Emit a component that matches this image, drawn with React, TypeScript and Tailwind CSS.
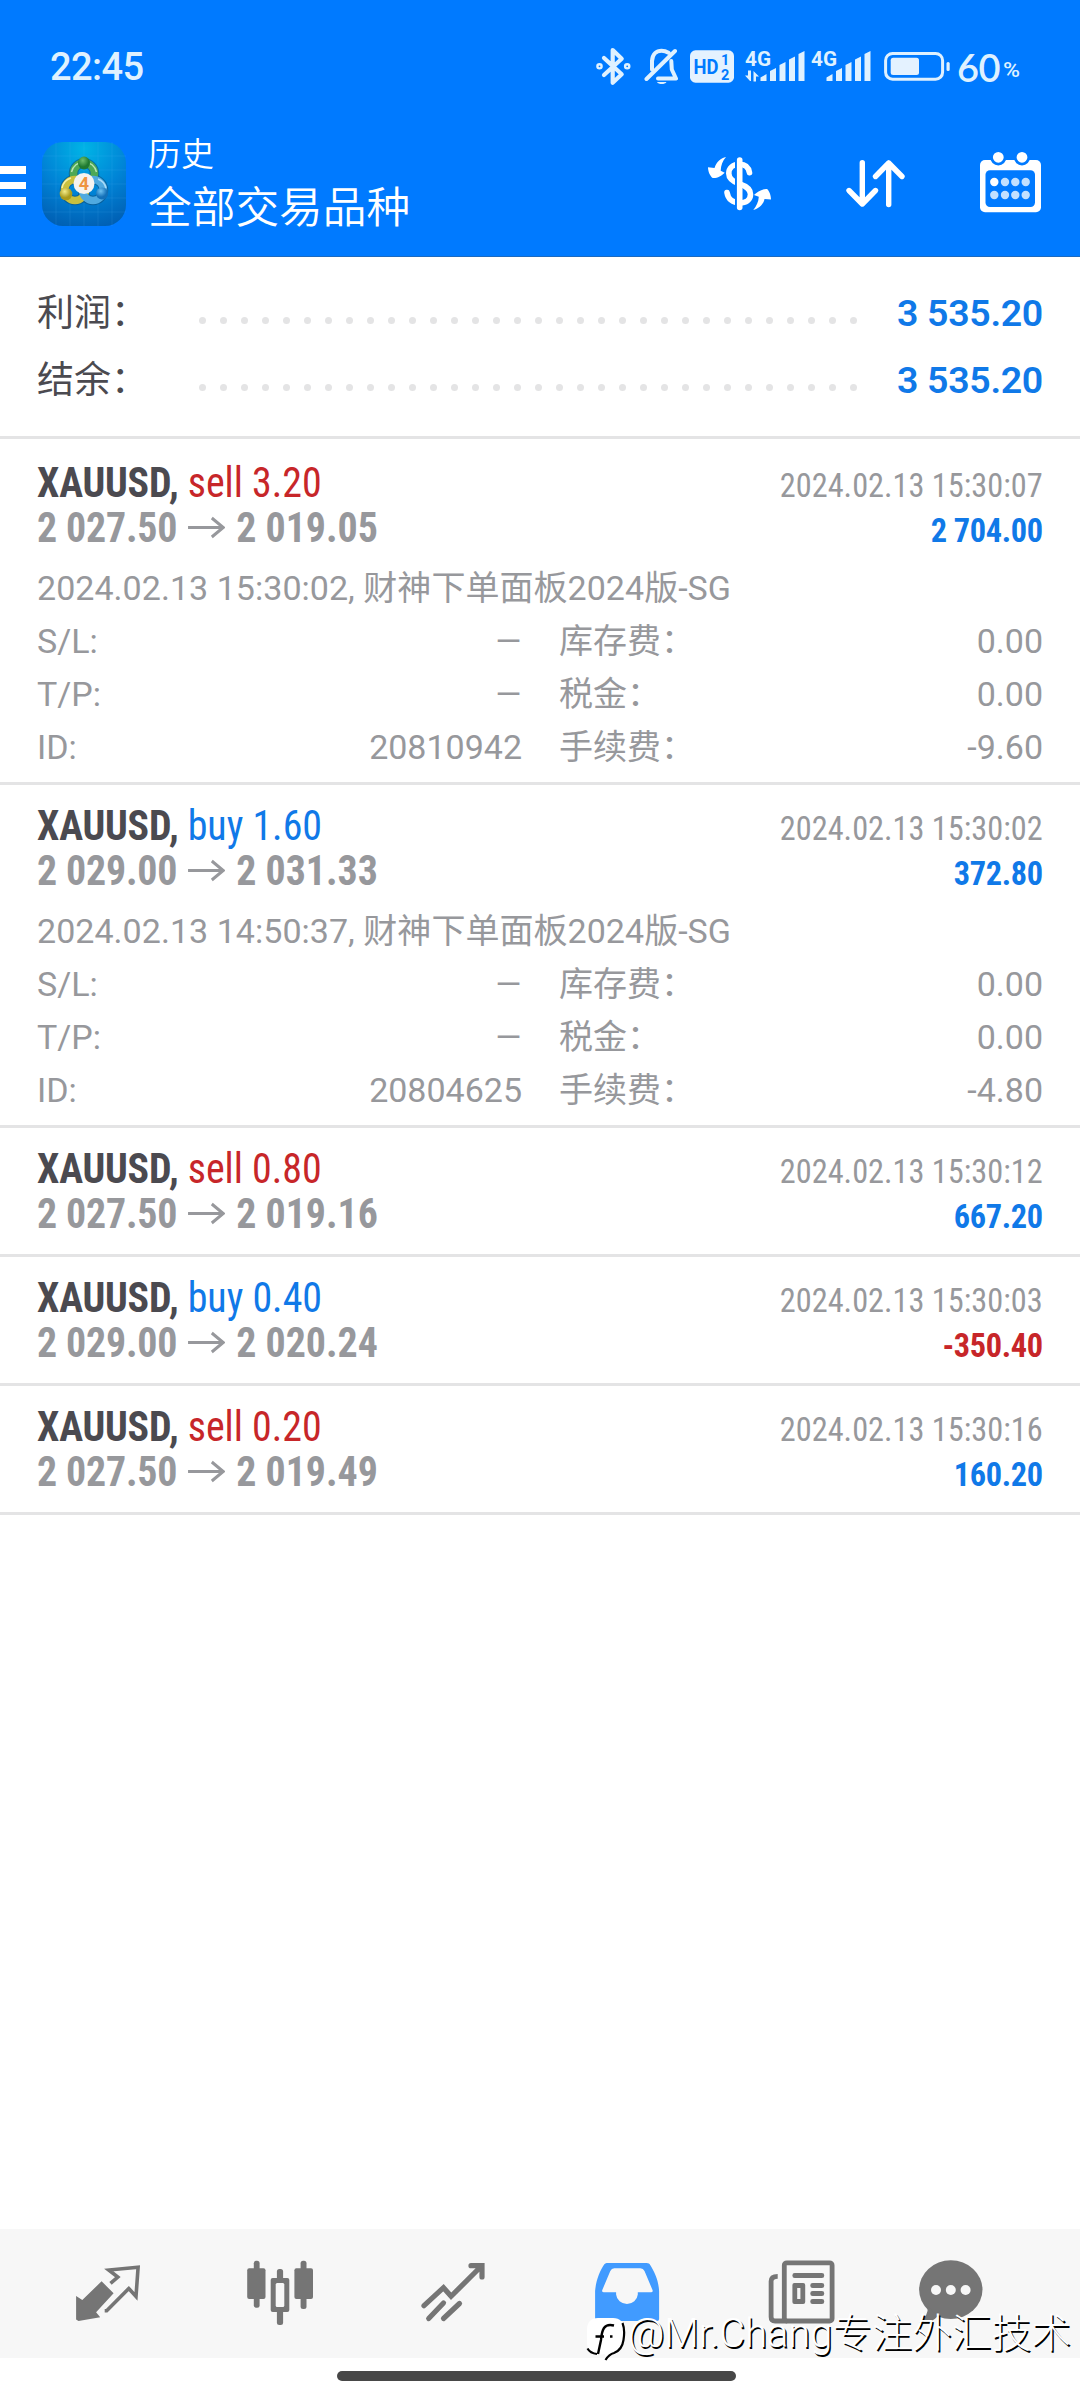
import { ReactNode } from "react";
import clsx from "clsx";

type Deal = {
  side: "sell" | "buy";
  volume: string;
  open: string;
  close: string;
  time: string;
  profit: string;
  details?: { comment: string; id: string; fee: string };
};

const deals: Deal[] = [
  {
    side: "sell", volume: "3.20", open: "2 027.50", close: "2 019.05", time: "2024.02.13 15:30:07", profit: "2 704.00",
    details: { comment: "2024.02.13 15:30:02, 财神下单面板2024版-SG", id: "20810942", fee: "-9.60" },
  },
  {
    side: "buy", volume: "1.60", open: "2 029.00", close: "2 031.33", time: "2024.02.13 15:30:02", profit: "372.80",
    details: { comment: "2024.02.13 14:50:37, 财神下单面板2024版-SG", id: "20804625", fee: "-4.80" },
  },
  { side: "sell", volume: "0.80", open: "2 027.50", close: "2 019.16", time: "2024.02.13 15:30:12", profit: "667.20" },
  { side: "buy", volume: "0.40", open: "2 029.00", close: "2 020.24", time: "2024.02.13 15:30:03", profit: "-350.40" },
  { side: "sell", volume: "0.20", open: "2 027.50", close: "2 019.49", time: "2024.02.13 15:30:16", profit: "160.20" },
];

function Signal({ data }: { data?: boolean }) {
  return (
    <svg width="66" height="44" viewBox="0 0 66 44" fill="currentColor">
      <text x="0" y="21.5" fontSize="20.5" fontWeight="700" textLength="26" lengthAdjust="spacingAndGlyphs">4G</text>
      {data && <path d="M5 37l-5-5.500h3v-5h3v10.500zM8.500 27l5.500 5.500h-3v5h-2.500z" />}
      <path d="M15.500 37v-3.500l6-3.500v7zM25 37v-10l6-3v13zM34.500 37v-16l6-3v19zM44 37v-21.500l6-3v24.500zM53.500 37v-27l6-3v30z" />
    </svg>
  );
}

function StatusBar() {
  return (
    <div className="flex h-[88px] items-end pl-[50px] text-[#dff1ff]">
      <span className="w-[546px] pt-px text-[38px] leading-[42px] font-medium tracking-[-0.6px]">22:45</span>
      {/* bluetooth */}
      <svg className="mr-3" width="36" height="44" viewBox="0 0 36 44" fill="none" stroke="currentColor" strokeWidth="4.200" strokeLinecap="round" strokeLinejoin="round">
        <path d="M8 14l17.700 16.300-9 8.400V6l9 8.700L8 31" />
        <circle cx="3.500" cy="22.300" r="1.200" /><circle cx="31.200" cy="22.300" r="1.200" />
      </svg>
      {/* muted bell */}
      <svg className="mr-[10px]" width="36" height="44" viewBox="0 0 36 44" fill="none" stroke="currentColor" strokeWidth="4" strokeLinecap="round" strokeLinejoin="round">
        <path d="M31 7L2.500 35M8 25.500V17C8.500 10 12.500 6.800 17.500 6.800c3 0 5 .8 7 2M27.300 17l.5 8.500L32 34.500H14" />
        <path d="M13 38h9.500c-1.500 2.800-8 2.800-9.500 0z" fill="currentColor" stroke="none" />
      </svg>
      <svg className="mr-[11px]" width="44" height="44" viewBox="0 0 44 44" fontWeight="700">
        <rect y="6.300" width="44" height="32.400" rx="5.500" fill="#e4f2ff" />
        <g fill="#007aff">
          <text x="3.500" y="29.500" fontSize="20.500" textLength="25" lengthAdjust="spacingAndGlyphs">HD</text>
          <text x="31" y="20.500" fontSize="14.500">1</text>
          <text x="31" y="35.500" fontSize="14.500">2</text>
        </g>
      </svg>
      <Signal data />
      <Signal />
      <svg className="ml-[7px]" width="66" height="44" viewBox="0 0 66 44">
        <rect x="1.600" y="9.400" width="57" height="25.800" rx="7" fill="none" stroke="currentColor" strokeWidth="3" />
        <rect x="6.700" y="13.700" width="28.300" height="17.300" rx="2.500" fill="#e4f2ff" />
        <rect x="62.500" y="18" width="3.200" height="9" rx="1.500" fill="currentColor" />
      </svg>
      <span className="ml-[7px] pt-px font-['Lato',sans-serif] text-[38px] leading-[42px] font-semibold tracking-[-0.5px]">60</span>
      <span className="ml-[3px] origin-bottom-left scale-x-110 text-[21px] leading-[35px] font-medium">%</span>
    </div>
  );
}

function AppLogo() {
  return (
    <svg width="84" height="84" viewBox="0 0 84 84">
      <defs>
        <radialGradient id="tile" cx="50%" cy="8%" r="95%">
          <stop offset="0" stopColor="#00b4e6" />
          <stop offset=".55" stopColor="#0083d6" />
          <stop offset="1" stopColor="#0060b4" />
        </radialGradient>
        <radialGradient id="green" cx="40%" cy="30%"><stop offset="0" stopColor="#6fbf6c" /><stop offset="1" stopColor="#1f7a30" /></radialGradient>
        <radialGradient id="yellow" cx="40%" cy="30%"><stop offset="0" stopColor="#f3ec8a" /><stop offset="1" stopColor="#a99a1c" /></radialGradient>
        <radialGradient id="blue" cx="40%" cy="30%"><stop offset="0" stopColor="#6fc2f2" /><stop offset="1" stopColor="#1470b8" /></radialGradient>
      </defs>
      <rect width="84" height="84" rx="21" fill="url(#tile)" />
      <path d="M0 14h84M0 28h84M0 42h84M0 56h84M0 70h84M14 0v84M28 0v84M42 0v84M56 0v84M70 0v84" stroke="#5cc4f5" strokeOpacity=".13" />
      <g fill="none" stroke="#0b4f7c" strokeOpacity=".6" strokeWidth="9.500">
        <circle cx="33" cy="48" r="10.500" /><circle cx="51" cy="48" r="10.500" /><circle cx="42" cy="31.500" r="10.500" />
      </g>
      <g fill="none" strokeWidth="7.500">
        <circle cx="42" cy="31.500" r="10.500" stroke="#4da855" />
        <circle cx="33" cy="48" r="10.500" stroke="#c9c03e" />
        <circle cx="51" cy="48" r="10.500" stroke="#4fa9e0" />
      </g>
      <path d="M29.500 30a12.800 12.800 0 0 1 25 0" fill="none" stroke="#b9e3b4" strokeWidth="1.500" />
      <path d="M20 46a13 13 0 0 1 9-10" fill="none" stroke="#f4f0a8" strokeWidth="1.500" />
      <path d="M64 46a13 13 0 0 0-8-9" fill="none" stroke="#a9dbf7" strokeWidth="1.500" />
      <ellipse cx="42" cy="21" rx="6" ry="6.500" fill="url(#green)" />
      <circle cx="24" cy="52" r="6.300" fill="url(#yellow)" />
      <circle cx="60" cy="51.500" r="6" fill="url(#blue)" />
      <circle cx="42" cy="41.500" r="10.500" fill="#f5f3f0" />
      <text x="42" y="48" fontSize="18" fontWeight="700" textAnchor="middle" fill="#ee9440">4</text>
    </svg>
  );
}

function Header() {
  return (
    <header className="h-[257px] border-b border-[#1b6ac0] bg-[#007aff] text-white">
      <StatusBar />
      <div className="flex h-[168px] items-start">
        <div className="mt-[78px] flex w-[26px] flex-col gap-2">
          <i className="h-[7.500px] bg-white" />
          <i className="h-[7.500px] bg-white" />
          <i className="h-[7.500px] bg-white" />
        </div>
        <div className="mt-[54px] ml-4"><AppLogo /></div>
        <div className="mt-[44px] ml-[22px] w-[556px] font-[350]">
          <p className="text-[33px] leading-[46px]">历史</p>
          <p className="text-[43.700px] leading-[61px]">全部交易品种</p>
        </div>
        <svg className="mt-[62px]" width="72" height="68" viewBox="0 0 72 68" fill="none" stroke="#fff" strokeWidth="5.600" strokeLinecap="round">
          <path d="M45.500 22.700C44.500 17 41 14.300 35.700 14.300 29 14.300 24.800 18 24.800 23.500c0 6 5 8.500 10.900 10.500 6.300 2.100 10.800 4.500 10.800 10.300 0 5.700-4.500 8.700-10.800 8.700-6.700 0-11.700-4-12.700-10.500" />
          <path d="M32.500 9v49" stroke="#007aff" strokeWidth="3" strokeLinecap="butt" />
          <path d="M35.700 10v47.500" />
          <path d="M22 7C17 8 12.500 11.500 10.500 18L4 17.300c0 4 2 9 4.700 10.700 4 .5 9-2 12-5.300l-4-2C17 15 18.500 11 22 7zM49.300 60C54.500 59 59.500 54.500 60.500 49l6.500.5c0-4-1.500-8.500-4-10.500-4-.5-10 3-13 6l4.800 1.800C54.500 52 52.500 56 49.300 60z" fill="#fff" stroke="none" />
        </svg>
        <svg className="mt-[62px] ml-16" width="72" height="68" viewBox="0 0 72 68" fill="none" stroke="#fff" strokeWidth="5.400" strokeLinecap="round" strokeLinejoin="round">
          <path d="M22.300 12.700V54M9 40.500L22.300 54l13.200-13.500M48.700 54.500V13M35.500 26.500L48.700 13 62 26.500" />
        </svg>
        <svg className="mt-[58px] ml-[62px]" width="72" height="72" viewBox="0 0 72 72">
          <rect x="6" y="14" width="61" height="52.300" rx="5" fill="#fff" />
          <rect x="11.500" y="24.300" width="49.500" height="36.700" rx="4.500" fill="#007aff" />
          <g fill="#fff" stroke="#007aff" strokeWidth="2.800"><circle cx="24.300" cy="11.300" r="6.800" /><circle cx="48" cy="11.300" r="6.800" /></g>
          {[36, 49].map((y) => [20.3, 31, 41.3, 51.7].map((x) => (
            <circle key={`${x}-${y}`} cx={x} cy={y} r="4.200" fill={x < 21 && y < 40 ? "#fff" : "#c2e0ff"} />
          )))}
        </svg>
      </div>
    </header>
  );
}

function SummaryRow({ label, value }: { label: string; value: string }) {
  return (
    <div className="flex h-[67px] text-[37px] leading-[67px]">
      <span className="w-[162px] pt-px text-[#4b4a50]">{label}</span>
      <div className="mt-[38px] flex w-[658px] justify-between">
        {Array.from({ length: 32 }, (_, i) => <i key={i} className="size-[7px] rounded-full bg-[#e4e4e5]" />)}
      </div>
      <span className="ml-auto pt-px text-[37.500px] font-semibold tracking-[-0.3px] text-[#1079e8]">{value}</span>
    </div>
  );
}

function Detail({ label, children }: { label: string; children: ReactNode }) {
  return <div className="flex justify-between"><span>{label}</span><span>{children}</span></div>;
}

const none = <span className="mr-[-1px] inline-block origin-right scale-x-[1.3]">–</span>;

function DealItem({ deal }: { deal: Deal }) {
  const { details } = deal;
  return (
    <li className={clsx("border-b-[3px] border-[#e4e4e5] pt-[18px] pr-[37px] pl-[37px] text-[#97989c]", details ? "h-[343px]" : "h-[129px]")}>
      <div className="flex justify-between font-stretch-condensed">
        <div className="origin-left scale-x-[0.95] text-[42px] leading-[45px]">
          <p>
            <b className="tracking-[-0.2px] text-[#4b4a50]">XAUUSD,</b>{" "}
            <span className={deal.side === "sell" ? "text-[#c72629]" : "text-[#1079e8]"}>{deal.side} {deal.volume}</span>
          </p>
          <p className="flex font-bold">
            <span className="tracking-[-0.2px]">{deal.open}</span>
            <svg className="mr-[12px] ml-[10px] mt-[11px]" width="40" height="24" viewBox="0 0 40 24" fill="none" stroke="currentColor" strokeWidth="3.200"><path d="M1 11.500h36M26 2l12 9.500-12 9.500" /></svg>
            {deal.close}
          </p>
        </div>
        <div className="origin-right scale-x-[0.95] pt-[3px] text-right text-[34px] leading-[45px]">
          <p>{deal.time}</p>
          <p className={clsx("font-bold tracking-[-0.4px]", deal.profit.startsWith("-") ? "text-[#c72629]" : "text-[#1079e8]")}>{deal.profit}</p>
        </div>
      </div>
      {details && (
        <div className="mt-[9px] text-[34px] leading-[53px]">
          <p className="tracking-[0.04px]">{details.comment}</p>
          <div className="grid grid-cols-[485px_1fr] gap-x-[37px]">
            <Detail label="S/L:">{none}</Detail>
            <Detail label="库存费：">0.00</Detail>
            <Detail label="T/P:">{none}</Detail>
            <Detail label="税金：">0.00</Detail>
            <Detail label="ID:">{details.id}</Detail>
            <Detail label="手续费：">{details.fee}</Detail>
          </div>
        </div>
      )}
    </li>
  );
}

function NavIcon({ className, children }: { className?: string; children: ReactNode }) {
  return <svg className={className} width="72" height="72" viewBox="0 0 72 72" fill="currentColor">{children}</svg>;
}

function BottomNav() {
  return (
    <nav className="flex h-[129px] items-center gap-[101px] bg-[#f7f7f7] pl-[72px] text-[#757575]">
      <NavIcon>
        <path d="M4.100 38l6.200 4 19.300-18.700 12 12-17.500 19 4.100 5L6.500 63l-2.400-1.500z" />
        <path d="M38.500 25.300l7.300-6.300-9-7 29.300-2.700L64 38.500l-7.200-8-22.100 22.200h-2" fill="none" stroke="currentColor" strokeWidth="3.600" />
      </NavIcon>
      <NavIcon>
        <rect x="8.800" y="2.700" width="5.800" height="47" rx="2.500" /><rect x="2.200" y="10.300" width="18.300" height="30.700" rx="2" />
        <rect x="31.900" y="11" width="6.200" height="56" rx="2.500" /><rect x="25.700" y="20" width="18.600" height="34" rx="2" />
        <rect x="30.700" y="25" width="8.600" height="24" rx="1.500" fill="#f7f7f7" />
        <rect x="55.600" y="2.700" width="5.900" height="48.300" rx="2.500" /><rect x="49.400" y="10.300" width="18.600" height="30.700" rx="2" />
      </NavIcon>
      <NavIcon>
        <g fill="none" stroke="currentColor" strokeWidth="5.200" strokeLinecap="round">
          <path d="M6 47.700l19.500-18 7.600 8.600L63.500 8M53 7.700h11V19" />
          <path d="M10.700 60.500l14.800-15.500M25.500 60.500L41.500 45.500" />
        </g>
      </NavIcon>
      <NavIcon className="text-[#419bff]">
        <path d="M4.100 61V33C5 22 9 13 12.500 7.500 13.500 5.500 15 5 17 5h38.500c2 0 3 .7 4 2.500C63.500 14 67.500 22 68.100 33v28q0 2-2 2h-60q-2 0-2-2z" />
        <path d="M23.300 10.300h26q3 0 4.200 2.700l8 19q.8 2.300-1.500 2.300H46.800V36.500a10.900 10.500 0 0 1-21.700 0V34.300H13q-2.500 0-1.700-2.300l8-19q1.200-2.700 4-2.700z" fill="#f7f7f7" />
      </NavIcon>
      <NavIcon>
        <g fill="none" stroke="currentColor" strokeWidth="4.800">
          <rect x="20.300" y="4.800" width="47.800" height="58.200" rx="2.500" />
          <path d="M13.700 18.300q-6.600 0-6.600 5V59q0 4 4 4h12" />
        </g>
        <rect x="28.400" y="15" width="31.800" height="5" rx="2.300" />
        <rect x="28.400" y="25" width="12.800" height="21" rx="2" /><rect x="33.200" y="30" width="3.200" height="11" fill="#f7f7f7" />
        <rect x="46.300" y="25" width="13.900" height="5" rx="2.300" /><rect x="46.300" y="33" width="13.900" height="5" rx="2.300" /><rect x="46.300" y="41" width="13.900" height="5" rx="2.300" />
      </NavIcon>
      <NavIcon className="-ml-[22px]">
        <ellipse cx="35.800" cy="31.600" rx="31.700" ry="29.300" />
        <path d="M12.700 48q1 10-8.700 17.300Q16 66 23 58z" />
        <g fill="#f7f7f7"><circle cx="21" cy="32" r="5" /><circle cx="35.800" cy="32" r="5" /><circle cx="50.600" cy="32" r="5" /></g>
      </NavIcon>
    </nav>
  );
}

function Watermark() {
  return (
    <div className="absolute top-[2306px] left-[586px] flex items-center text-white">
      <svg className="mt-2" width="40" height="48" viewBox="0 0 40 48">
        <path d="M12 4h15c7 0 11 4 11 12v11c0 7-4 12-11 13l-7 5-1-5-7 1C5 38 1 36 1 28V16C1 8 5 4 12 4z" fill="#fff" />
        <path d="M36.500 9c2 5 2 11 1 17-1 7-4 11-9.500 13-4 1-6 3-8.500 7M1.500 34.500c2 3.500 5 5 9.500 5.500" fill="none" stroke="#000" strokeWidth="2.200" />
        <path d="M28 11.500c-4-1-8-.5-10 2.500-2.500 4-2.500 8-3 12l-3 14M9.500 22.500H18M24 22.500h2.500" fill="none" stroke="#000" strokeWidth="2.400" />
      </svg>
      <span className="ml-0.5 text-[39.800px] leading-[56px] font-light whitespace-nowrap [text-shadow:1.5px_1.5px_0.5px_#000]">@Mr.Chang专注外汇技术</span>
    </div>
  );
}

export default function App() {
  return (
    <div className="relative flex h-[2400px] w-[1080px] flex-col overflow-hidden bg-white font-['Roboto','Noto_Sans_CJK_SC',sans-serif]">
      <Header />
      <main className="flex-1">
        <section className="mb-[3px] h-[182px] border-b-[3px] border-[#e4e4e5] pt-[22px] pr-[37px] pl-[37px]">
          <SummaryRow label="利润：" value="3 535.20" />
          <SummaryRow label="结余：" value="3 535.20" />
        </section>
        <ul>
          {deals.map((deal) => <DealItem key={deal.time} deal={deal} />)}
        </ul>
      </main>
      <BottomNav />
      <div className="h-[42px] pt-[13px] pl-[337px]">
        <div className="h-[10px] w-[399px] rounded-full bg-[#474747]" />
      </div>
      <Watermark />
    </div>
  );
}
